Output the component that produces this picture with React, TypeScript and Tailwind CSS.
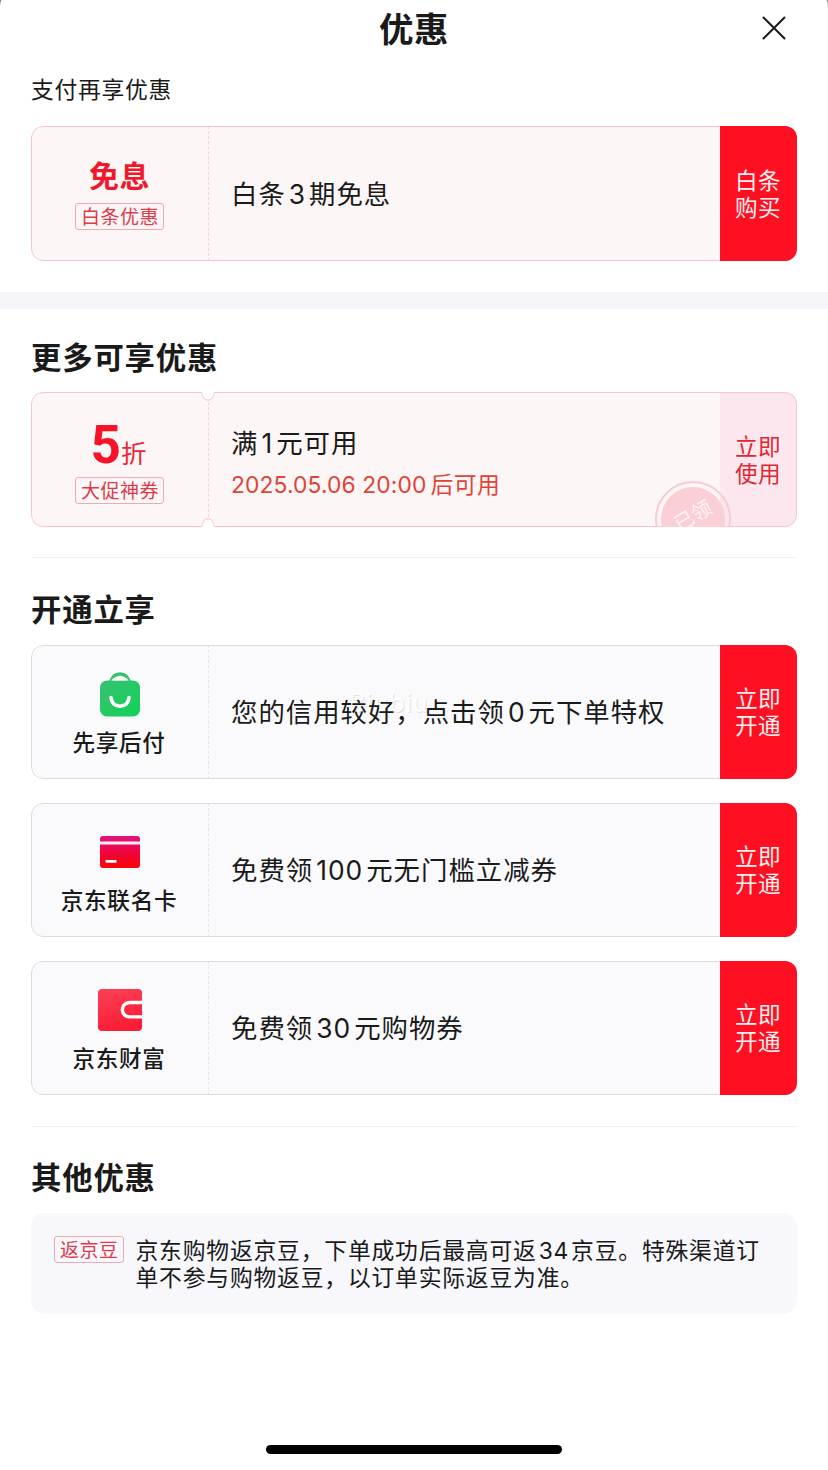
import type { ReactNode } from "react";

const num = "mx-[3px]";

function Title({ children, className = "" }: { children: ReactNode; className?: string }) {
  return (
    <h2 className={`whitespace-nowrap text-[30.400px] leading-[40px] font-bold tracking-[0.800px] ${className}`}>{children}</h2>
  );
}

function Tag({ children }: { children: ReactNode }) {
  return (
    <span className="flex h-[27px] items-center justify-center rounded-[3px] border border-[#f0a9b2] pt-[2px] pr-[4px] pl-[5px] text-[19px] leading-none tracking-[0.500px] whitespace-nowrap text-[#dc3b4a]">
      {children}
    </span>
  );
}

function Action({ top, bottom, soft }: { top: string; bottom: string; soft?: boolean }) {
  return (
    <button
      className={`flex w-[77px] shrink-0 flex-col items-center justify-center pr-px text-[22.600px] leading-[27px] tracking-[0.400px] ${
        soft ? "bg-[#fde7ee] text-[#e2262f]" : "relative z-10 bg-[#fe0f22] text-[#fff0f0]"
      }`}
    >
      <span>{top}</span>
      <span>{bottom}</span>
    </button>
  );
}

function Coupon({
  pink,
  left,
  action,
  children,
  overlay,
}: {
  pink?: boolean;
  left: ReactNode;
  action: ReactNode;
  children: ReactNode;
  overlay?: ReactNode;
}) {
  return (
    <div
      className={`relative flex overflow-hidden rounded-[12px] ${pink ? "h-[135px] bg-[#fdf6f6]" : "h-[134px] bg-[#fafafc]"}`}
    >
      <div
        className={`flex w-[178px] shrink-0 flex-col items-center border-r border-dashed ${
          pink ? "border-[#fad3d9]" : "border-[#e6e6ea]"
        }`}
      >
        {left}
      </div>
      <div className="flex min-w-0 flex-1 flex-col justify-center pl-[22px] text-[26.400px] leading-[36px] tracking-[1px] whitespace-nowrap">
        {children}
      </div>
      {action}
      <div
        className={`pointer-events-none absolute inset-0 rounded-[12px] border ${
          pink ? "border-[#f7c4cf]" : "border-[#dcdcdf]"
        }`}
      />
      {overlay}
    </div>
  );
}

function BagIcon() {
  return (
    <svg width="40" height="45" viewBox="0 0 40 45" fill="none">
      <defs>
        <linearGradient id="bag" x1="0" y1="0" x2="1" y2="1">
          <stop offset="0" stopColor="#38c172" />
          <stop offset="1" stopColor="#10d257" />
        </linearGradient>
      </defs>
      <path d="M10.500 11C12 5 15.400 2 20 2s8 3 9.500 9" stroke="#35c36f" strokeWidth="3.600" />
      <rect x="0" y="8.500" width="40" height="36" rx="7" fill="url(#bag)" />
      <path d="M11.200 8.500C13 5.700 16 4.500 20 4.500s7 1.200 8.800 4z" fill="#f3fbf6" />
      <path d="M11 25.500c.5 5.600 4 8.700 9 8.700s8.500-3.100 9-8.700" stroke="#fff" strokeWidth="3.600" strokeLinecap="round" />
    </svg>
  );
}

function CardIcon() {
  return (
    <svg width="40" height="32" viewBox="0 0 40 32">
      <defs>
        <linearGradient id="card" x1="0" y1="0" x2="0" y2="1">
          <stop offset="0" stopColor="#e3127d" />
          <stop offset="0.550" stopColor="#f00438" />
          <stop offset="1" stopColor="#fb0505" />
        </linearGradient>
      </defs>
      <rect width="40" height="32" rx="3" fill="url(#card)" />
      <rect y="5.500" width="40" height="3" fill="#fff0f6" />
      <rect x="5.500" y="24" width="11" height="2.700" rx="0.600" fill="#fff" />
    </svg>
  );
}

function WalletIcon() {
  return (
    <svg width="44" height="42" viewBox="0 0 44 42" fill="none">
      <defs>
        <linearGradient id="wallet" x1="0" y1="0" x2="0.300" y2="1">
          <stop offset="0" stopColor="#fb4257" />
          <stop offset="1" stopColor="#fb1d35" />
        </linearGradient>
      </defs>
      <rect width="44" height="42" rx="4" fill="url(#wallet)" />
      <path d="M44 13.500H31.500a7.200 7.200 0 0 0 0 14.400H44" stroke="#fff" strokeWidth="3.400" />
    </svg>
  );
}

function Notch({ bottom }: { bottom?: boolean }) {
  return (
    <svg
      className={`absolute left-[167px] ${bottom ? "bottom-0 rotate-180" : "top-0"}`}
      width="20"
      height="10"
      viewBox="0 0 20 10"
      fill="none"
    >
      <path d="M3 0c.7 0 1 1 1.300 2.500C5 6.200 7 8.200 10 8.200s5-2 5.700-5.700C16 1 16.300 0 17 0z" fill="#fff" />
      <path d="M3 .5c.7 0 1 1 1.300 2C5 6.200 7 8.200 10 8.200s5-2 5.700-5.700c.3-1 .6-2 1.300-2" stroke="#f7c4cf" />
    </svg>
  );
}

const offers = [
  {
    name: "先享后付",
    icon: <BagIcon />,
    pad: "pt-[27px]",
    text: (
      <>
        您的信用较好，点击领<span className={num}>0</span>元下单特权
      </>
    ),
  },
  {
    name: "京东联名卡",
    icon: <CardIcon />,
    pad: "pt-[33px]",
    text: (
      <>
        免费领<span className={num}>100</span>元无门槛立减券
      </>
    ),
  },
  {
    name: "京东财富",
    icon: <WalletIcon />,
    pad: "pt-[28px]",
    text: (
      <>
        免费领<span className={num}>30</span>元购物券
      </>
    ),
  },
];

export default function App() {
  return (
    <div className="w-[828px] bg-[#8c8c8c]">
      <main className="flex h-[1470px] w-[828px] flex-col overflow-hidden bg-white font-['Inter','Noto_Sans_CJK_SC',sans-serif] text-[#1a1a1a] [border-radius:2px_2px_0_0/8px_8px_0_0]">
        <header className="relative flex h-[56px] shrink-0 items-center justify-center">
          <h1 className="pt-[3px] text-[34.500px] leading-[56px] font-bold tracking-[0.500px]">优惠</h1>
          <button aria-label="关闭" className="absolute top-[16px] right-[42px]">
            <svg width="24" height="24" viewBox="0 0 24 24" stroke="#1a1a1a" strokeWidth="2" strokeLinecap="round">
              <path d="M1.500 1.500l21 21M22.500 1.500l-21 21" />
            </svg>
          </button>
        </header>

        <section className="h-[236px] shrink-0 px-[31px] pt-[18px]">
          <p className="mb-[20px] text-[22.800px] leading-[32px] tracking-[0.700px]">支付再享优惠</p>
          <Coupon
            pink
            left={
              <>
                <strong className="mt-[30px] mb-[7px] text-[30px] leading-[40px] font-bold tracking-[0.500px] text-[#f0192c]">
                  免息
                </strong>
                <Tag>白条优惠</Tag>
              </>
            }
            action={<Action top="白条" bottom="购买" />}
          >
            <p className="pt-px">
              白条<span className={num}>3</span>期免息
            </p>
          </Coupon>
        </section>

        <div className="h-[17px] shrink-0 bg-[#f6f6fa]" />

        <section className="mx-[31px] h-[249px] shrink-0 border-b border-[#f0f0f2] pt-[29px]">
          <Title className="mb-[14px]">更多可享优惠</Title>
          <Coupon
            pink
            left={
              <>
                <div className="mt-[29px] mb-[7px] flex h-[49px] items-baseline pr-[2px] leading-[49px] text-[#f81228]">
                  <span className="font-[Roboto] text-[53px] font-bold">5</span>
                  <span className="text-[25.500px] text-[#e72a3a]">折</span>
                </div>
                <Tag>大促神券</Tag>
              </>
            }
            action={<Action top="立即" bottom="使用" soft />}
            overlay={
              <>
                <Notch />
                <Notch bottom />
                <div className="absolute top-[89px] left-[624px] flex size-[76px] items-center justify-center rounded-full border-2 border-[#f8cbd4]">
                  <div className="flex size-[64px] items-center justify-center rounded-full bg-[#fbcfd6]">
                    <span className="-translate-y-[3px] -rotate-30 text-[20px] leading-none whitespace-nowrap text-[#fff3f5]">已领</span>
                  </div>
                </div>
              </>
            }
          >
            <p className="pt-[7px] leading-[36px]">
              满<span className={num}>1</span>元可用
            </p>
            <p className="mt-[7px] text-[22.800px] leading-[34px] tracking-[0.500px] text-[#df4436]">
              <span className="tracking-[0.120px]">2025.05.06 20:00</span>
              <span className="ml-[4px]">后可用</span>
            </p>
          </Coupon>
        </section>

        <section className="mx-[31px] h-[569px] shrink-0 border-b border-[#f0f0f2] pt-[32px]">
          <Title className="mb-[15px]">开通立享</Title>
          <div className="flex flex-col gap-[24px]">
            {offers.map((offer, index) => (
              <Coupon
                key={offer.name}
                action={<Action top="立即" bottom="开通" />}
                left={
                  <div className={`flex h-full flex-col items-center justify-between pb-[20px] ${offer.pad}`}>
                    {offer.icon}
                    <span className="pr-px text-[22.600px] leading-[32px] font-medium tracking-[0.700px]">{offer.name}</span>
                  </div>
                }
              >
                {index === 0 && (
                  <span className="absolute top-[42px] left-[318px] text-[25px] leading-[32px] tracking-[1px] text-white [text-shadow:1px_1px_1px_rgb(0_0_0/0.12)]">
                    Biubiu
                  </span>
                )}
                <p className="relative">{offer.text}</p>
              </Coupon>
            ))}
          </div>
        </section>

        <section className="mx-[31px] flex-1 pt-[31px]">
          <Title className="mb-[15px]">其他优惠</Title>
          <div className="flex h-[101px] items-start rounded-[14px] bg-[#f7f7fc] pt-[23px] pl-[23px]">
            <Tag>返京豆</Tag>
            <p className="mt-px ml-[12px] text-[22.800px] leading-[27px] tracking-[0.800px] whitespace-nowrap">
              京东购物返京豆，下单成功后最高可返<span className="mx-[2px]">34</span>京豆。特殊渠道订
              <br />
              单不参与购物返豆，以订单实际返豆为准。
            </p>
          </div>
        </section>

        <footer className="flex h-[25px] shrink-0 justify-center">
          <div className="h-[9px] w-[296px] rounded-full bg-black" />
        </footer>
      </main>
    </div>
  );
}
